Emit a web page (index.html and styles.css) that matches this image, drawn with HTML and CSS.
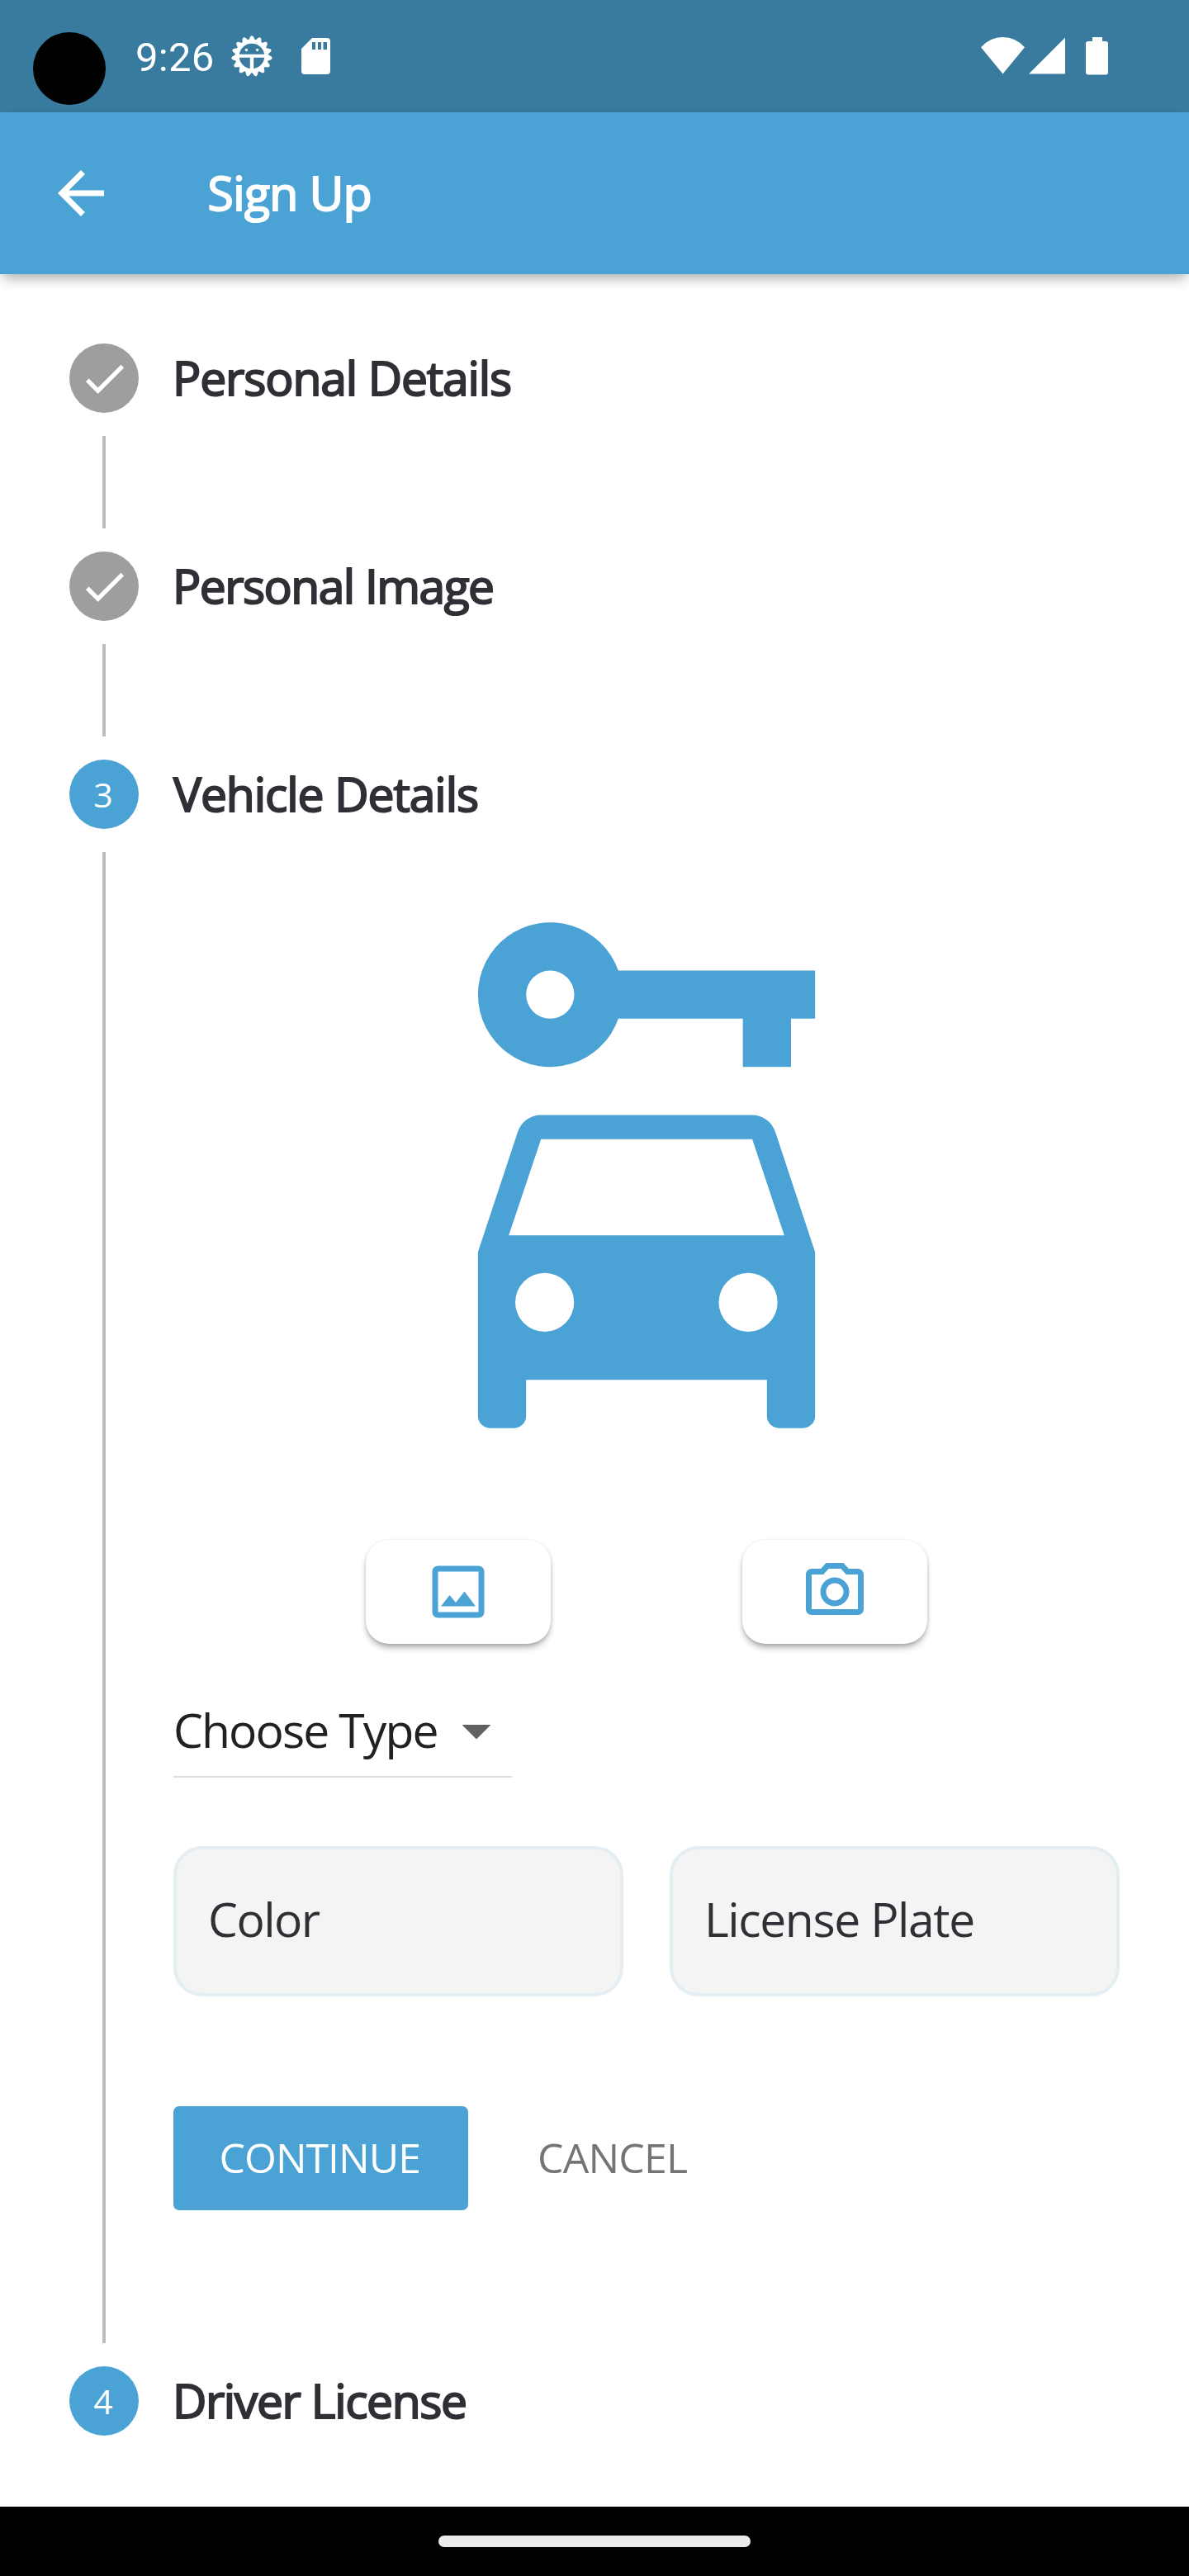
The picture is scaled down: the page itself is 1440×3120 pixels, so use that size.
FILE: index.html
```html
<!DOCTYPE html>
<html lang="en">
<head>
<meta charset="utf-8">
<title>Sign Up</title>
<link rel="stylesheet" href="styles.css">
</head>
<body>
<div class="screen">
  <div class="status-bar">
    <span class="camera"></span>
    <span class="clock">9:26</span>
    <svg class="gear" viewBox="-25 -25 50 50" width="50" height="50">
      <defs><path id="tooth" d="M-4.6 18 L-1.9 23.6 Q0 25.8 1.9 23.6 L4.6 18z"/></defs>
      <g fill="#fff">
        <use href="#tooth" transform="rotate(12)"/><use href="#tooth" transform="rotate(36)"/>
        <use href="#tooth" transform="rotate(60)"/><use href="#tooth" transform="rotate(84)"/>
        <use href="#tooth" transform="rotate(108)"/><use href="#tooth" transform="rotate(132)"/>
        <use href="#tooth" transform="rotate(156)"/><use href="#tooth" transform="rotate(180)"/>
        <use href="#tooth" transform="rotate(204)"/><use href="#tooth" transform="rotate(228)"/>
        <use href="#tooth" transform="rotate(252)"/><use href="#tooth" transform="rotate(276)"/>
        <use href="#tooth" transform="rotate(300)"/><use href="#tooth" transform="rotate(324)"/>
        <use href="#tooth" transform="rotate(348)"/>
        <circle cx="-6.6" cy="-7.5" r="1.7"/><circle cx="6.6" cy="-7.5" r="1.7"/>
        <path d="M-17-2.2H17V1.8H2.200V17H-2.200V1.8H-17z"/>
      </g>
      <circle r="17.8" fill="none" stroke="#fff" stroke-width="5"/>
    </svg>
    <svg class="sd" viewBox="0 0 35 44" width="35" height="44">
      <path fill="#fff" fill-rule="evenodd" d="M13 0H31Q35 0 35 4V40Q35 44 31 44H4Q0 44 0 40V13zM13 5V14H17V5zM20 5V14H24V5zM26.500 5V14H31V5z"/>
    </svg>
    <svg class="wifi" viewBox="0 0 53 45" width="53" height="45"><path fill="#fff" d="M26.500 44.500L0 12.300Q11 0 26.500 0T53 12.300z"/></svg>
    <svg class="signal" viewBox="0 0 45 45" width="45" height="45"><path fill="#fff" d="M0 44.500L44 .500V44.500z"/></svg>
    <svg class="battery" viewBox="0 0 27 46" width="27" height="46"><path fill="#fff" d="M8 0H20V5H24Q27 5 27 8V42.500Q27 45.500 24 45.500H3Q0 45.500 0 42.500V8Q0 5 3 5H8z"/></svg>
  </div>

  <header class="app-bar">
    <svg class="back" viewBox="0 0 24 24" width="84" height="84"><path fill="#fff" d="M20 11H7.830l5.590-5.590L12 4l-8 8 8 8 1.410-1.410L7.830 13H20v-2z"/></svg>
    <h1 class="title">Sign Up</h1>
  </header>

  <main class="stepper">
    <section class="step">
      <div class="step-head">
        <span class="dot done"><svg viewBox="0 0 24 24" width="63" height="63"><path fill="#fff" d="M9 16.200L4.800 12l-1.400 1.400L9 19 21 7l-1.400-1.400L9 16.200z"/></svg></span>
        <h2 class="label personal-details">Personal Details</h2>
      </div>
      <div class="step-body"><span class="line"></span></div>
    </section>

    <section class="step">
      <div class="step-head">
        <span class="dot done"><svg viewBox="0 0 24 24" width="63" height="63"><path fill="#fff" d="M9 16.200L4.800 12l-1.400 1.400L9 19 21 7l-1.400-1.400L9 16.200z"/></svg></span>
        <h2 class="label personal-image">Personal Image</h2>
      </div>
      <div class="step-body"><span class="line"></span></div>
    </section>

    <section class="step">
      <div class="step-head">
        <span class="dot">3</span>
        <h2 class="label vehicle-details">Vehicle Details</h2>
      </div>
      <div class="step-body open">
        <span class="line"></span>
        <div class="content">
          <svg class="car" viewBox="0 0 24 24" width="700" height="700">
            <path fill="#4ba3d5" fill-rule="evenodd" d="M10.830 3A3 3 0 1 0 10.830 5H16V7H18V5H19V3zM8 3A1 1 0 1 1 8 5A1 1 0 1 1 8 3z"/>
            <path fill="#4ba3d5" fill-rule="evenodd" d="M16.390 9H7.610C7.180 9 6.800 9.280 6.660 9.680L5 14.690V21.500C5 21.780 5.220 22 5.500 22H6.500C6.780 22 7 21.780 7 21.500V20H17V21.500C17 21.780 17.220 22 17.500 22H18.500C18.780 22 19 21.780 19 21.500V14.690L17.340 9.680C17.200 9.280 16.820 9 16.390 9zM7.620 10H16.390L17.720 14H6.280zM7.770 15.560A1.220 1.220 0 1 1 7.770 18A1.220 1.220 0 1 1 7.770 15.560zM16.220 15.560A1.220 1.220 0 1 1 16.220 18A1.220 1.220 0 1 1 16.220 15.560z"/>
          </svg>
          <div class="pickers">
            <button class="picker"><svg viewBox="0 0 24 24" width="84" height="84"><path fill="#4ba3d5" d="M19 5v14H5V5h14m0-2H5c-1.100 0-2 .900-2 2v14c0 1.100.900 2 2 2h14c1.100 0 2-.900 2-2V5c0-1.100-.900-2-2-2zm-4.860 8.860l-3 3.870L9 13.140 6 17h12l-3.860-5.140z"/></svg></button>
            <button class="picker"><svg viewBox="0 0 24 24" width="84" height="84"><path fill="#4ba3d5" d="M14.120 4l1.830 2H20v12H4V6h4.050l1.830-2h4.240M15 2H9L7.170 4H4c-1.100 0-2 .900-2 2v12c0 1.100.900 2 2 2h16c1.100 0 2-.900 2-2V6c0-1.100-.900-2-2-2h-3.170L15 2zm-3 7c1.650 0 3 1.350 3 3s-1.350 3-3 3-3-1.350-3-3 1.350-3 3-3m0-2c-2.760 0-5 2.240-5 5s2.240 5 5 5 5-2.240 5-5-2.240-5-5-5z"/></svg></button>
          </div>
          <div class="select">
            <span class="select-text">Choose Type</span>
            <svg viewBox="0 0 24 24" width="84" height="84"><path fill="#616161" d="M7 10l5 5 5-5z"/></svg>
          </div>
          <div class="fields">
            <div class="field color">Color</div>
            <div class="field plate">License Plate</div>
          </div>
          <div class="actions">
            <button class="action continue">CONTINUE</button>
            <button class="action cancel">CANCEL</button>
          </div>
        </div>
      </div>
    </section>

    <section class="step">
      <div class="step-head">
        <span class="dot four">4</span>
        <h2 class="label driver-license">Driver License</h2>
      </div>
    </section>
  </main>

  <div class="nav-bar"><span class="handle"></span></div>
</div>
</body>
</html>
```

FILE: styles.css
```css
* { box-sizing: border-box; }

body {
  margin: 0;
  background: #fff;
  font-family: "Open Sans", "Noto Sans", sans-serif;
}

svg { display: block; flex: none; }

button {
  border: 0;
  padding: 0;
  background: none;
  font-family: inherit;
}

.screen {
  width: 1440px;
  height: 3120px;
  display: flex;
  flex-direction: column;
  overflow: hidden;
}

/* System status bar */
.status-bar {
  height: 136px;
  flex: none;
  display: flex;
  align-items: flex-start;
  padding-left: 40px;
  background: #397a9f;
}
.camera {
  width: 88px;
  height: 88px;
  margin-top: 39px;
  border-radius: 50%;
  background: #000;
}
.clock {
  width: 96px;
  margin: 41px 0 0 36px;
  font: 49px/58px Roboto, sans-serif;
  letter-spacing: .3px;
  color: #fff;
  white-space: nowrap;
}
.gear { margin: 43px 0 0 20px; }
.sd { margin: 46px 0 0 35px; }
.wifi { margin: 45px 0 0 auto; }
.signal { margin: 45px 0 0 5px; }
.battery { margin: 45px 98px 0 24px; }

/* App bar */
.app-bar {
  height: 196px;
  flex: none;
  display: flex;
  align-items: center;
  padding-left: 56px;
  background: #4ba3d5;
  box-shadow: 0 7px 14px -3px rgba(0, 0, 0, .22), 0 9px 18px -5px rgba(0, 0, 0, .16);
  z-index: 1;
}
.title {
  margin: 0 0 0 111.500px;
  padding-bottom: 2px;
  font-size: 57px;
  font-weight: 400;
  line-height: 84px;
  letter-spacing: -.6px;
  color: #fff;
  -webkit-text-stroke: 2px #fff;
}

/* Stepper */
.stepper {
  flex: 1;
  padding: 84px 84px 0;
}
.step-head {
  display: flex;
  align-items: center;
  gap: 42px;
  height: 84px;
}
.dot {
  width: 84px;
  height: 84px;
  display: flex;
  align-items: center;
  justify-content: center;
  border-radius: 50%;
  background: #4ba3d5;
  color: #fff;
  font-size: 41px;
  line-height: 84px;
  padding-right: 2px;
}
.dot.done { background: #9e9e9e; padding: 0; }
.label {
  margin: 0;
  padding-bottom: 2px;
  font-size: 57px;
  font-weight: 400;
  line-height: 84px;
  color: #2f3035;
  white-space: nowrap;
  -webkit-text-stroke: 2px #2f3035;
}
.personal-details { letter-spacing: -1.13px; margin-left: -1px; }
.personal-image { letter-spacing: -1.55px; margin-left: -1px; }
.vehicle-details { letter-spacing: -1.07px; }
.driver-license { letter-spacing: -1.4px; margin-left: -1px; }

.step-body {
  display: flex;
  height: 168px;
  padding: 28px 0 28px 40.250px;
}
.step-body.open { height: 1862px; }
.line {
  width: 3.500px;
  flex: none;
  background: #bdbdbd;
}

/* Vehicle form */
.content {
  width: 1146px;
  flex: none;
  margin-left: 82.250px;
  padding-top: 55.500px;
}
.car { margin: 0 auto; }
.pickers {
  display: flex;
  justify-content: space-evenly;
  margin-top: 77.500px;
}
.picker {
  width: 224px;
  height: 126px;
  display: flex;
  align-items: center;
  justify-content: center;
  border-radius: 28px;
  background: #fff;
  box-shadow: 0 6px 8px -2px rgba(0, 0, 0, .32), 0 1px 4px rgba(0, 0, 0, .14);
}
.select {
  width: 410px;
  height: 100px;
  display: flex;
  align-items: flex-start;
  margin-top: 62px;
  border-bottom: 2px solid #dcdcdc;
}
.select-text {
  width: 325px;
  font-size: 57px;
  line-height: 84px;
  letter-spacing: -1.87px;
  white-space: nowrap;
  color: #212121;
}
.select svg { margin-top: 1px; }
.fields {
  display: flex;
  gap: 56px;
  margin-top: 83px;
}
.field {
  flex: 1;
  height: 182px;
  padding: 0 0 5px 38px;
  border: 4px solid #e3edf2;
  border-radius: 35px;
  background: #f4f4f4;
  color: #2f3035;
  font-size: 57px;
  line-height: 169px;
  white-space: nowrap;
}
.field.color { letter-spacing: -1.500px; }
.field.plate { letter-spacing: -1.400px; }
.actions {
  display: flex;
  align-items: center;
  margin-top: 133px;
}
.action {
  height: 126px;
  font-size: 50px;
  line-height: 124px;
  text-align: left;
  padding-bottom: 2px;
}
.continue {
  width: 357px;
  padding-left: 55.500px;
  border-radius: 7px;
  background: #4ba3d5;
  color: #fff;
  letter-spacing: -1px;
}
.cancel {
  margin-left: 84px;
  color: #757575;
  letter-spacing: -.8px;
}

/* Gesture navigation */
.nav-bar {
  height: 84px;
  flex: none;
  display: flex;
  justify-content: center;
  padding-top: 35px;
  background: #000;
}
.handle {
  width: 378px;
  height: 14px;
  border-radius: 7px;
  background: #ebebeb;
}
```
